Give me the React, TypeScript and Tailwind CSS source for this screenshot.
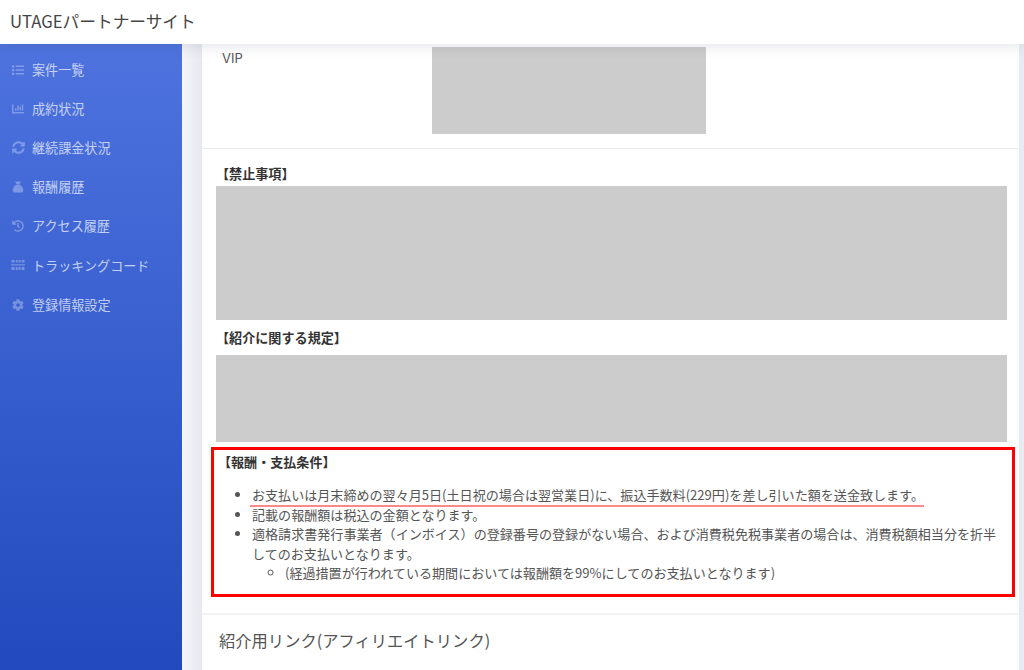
import { FaList, FaChartBar, FaSyncAlt, FaHistory, FaCog } from 'react-icons/fa';

function BagIcon({ className }: { className?: string }) {
  return (
    <svg viewBox="0 0 14 14" className={className} fill="currentColor">
      <path d="M3.600 0.500h6.800L8.800 3.500H5.200zM5.200 4.200h3.600C11 5.600 13.200 8.200 13.200 10.800c0 1.700-1.100 2.700-2.600 2.700H3.400c-1.500 0-2.600-1-2.600-2.700C0.800 8.200 3 5.600 5.200 4.200z" />
    </svg>
  );
}

function TrackingIcon({ className }: { className?: string }) {
  return (
    <svg viewBox="0 0 14 12" className={className} fill="currentColor">
      <path d="M0.500 1h3v2.500h-3zM4.700 1h2v2.500h-2zM7.500 1h2v2.500h-2zM10.500 1h3v2.500h-3zM0 5.300h14v1.200H0zM0.500 8h3v3h-3zM4.700 8h2v3h-2zM7.500 8h2v3h-2zM10.500 8h3v3h-3z" />
    </svg>
  );
}

const navItems = [
  { label: '案件一覧', icon: <FaList className="w-3 h-3" /> },
  { label: '成約状況', icon: <FaChartBar className="w-3 h-3" /> },
  { label: '継続課金状況', icon: <FaSyncAlt className="w-[13px] h-[13px]" /> },
  { label: '報酬履歴', icon: <BagIcon className="w-3 h-3" /> },
  { label: 'アクセス履歴', icon: <FaHistory className="w-3 h-3" /> },
  { label: 'トラッキングコード', icon: <TrackingIcon className="w-[14px] h-3 -ml-px" /> },
  { label: '登録情報設定', icon: <FaCog className="w-3 h-3" /> },
];

export default function App() {
  return (
    <div className="h-[670px] w-[1024px] overflow-hidden flex flex-col bg-[#e9ebf2] text-[#555] font-['Noto_Sans_CJK_JP','Noto_Sans',sans-serif]">
      <header className="relative z-10 h-[44px] shrink-0 bg-white flex items-center pl-[10px] text-[16.700px] text-[#444] shadow-[0_2px_14px_rgba(60,64,90,0.14)]">
        UTAGEパートナーサイト
      </header>

      <div className="flex flex-1 min-h-0">
        <aside className="w-[182px] shrink-0 bg-gradient-to-b from-[#4e73df] to-[#224abe] pt-[6px]">
          {navItems.map((item) => (
            <div key={item.label} className="h-[39.170px] flex items-center pl-[12px] text-[13.100px] text-white/70">
              <span className="w-[20px] flex text-white/30">{item.icon}</span>
              {item.label}
            </div>
          ))}
        </aside>

        <div className="w-[20px] shrink-0 bg-gradient-to-r from-[#f5f6fa] to-[#e7e8ef]" />

        <main className="flex-1 min-w-0 pr-[5px]">
          <div className="bg-white h-full">
            <div className="h-[105px] flex border-b-[1px] border-[#e9e9f0]">
              <div className="w-[230px] pl-[20px] pt-[5px] text-[13px] font-['Inter',sans-serif]">VIP</div>
              <div className="mt-[3px] w-[274px] h-[87px] bg-[#cccccc]" />
            </div>

            <div className="px-[14px] pt-[15px]">
              <p className="h-[22px] text-[13.100px] leading-[20px] font-bold text-[#333]">【禁止事項】</p>
              <div className="h-[134px] w-[791px] bg-[#cccccc]" />
              <p className="h-[35px] pt-[8px] text-[13.100px] leading-[20px] font-bold text-[#333]">【紹介に関する規定】</p>
              <div className="h-[87px] w-[791px] bg-[#cccccc]" />
            </div>

            <div className="ml-[9px] mt-[5px] w-[804px] h-[150px] border-[3px] border-[#ff0000] pl-[4px] pt-[2px] text-[13.070px]">
              <p className="h-[20px] leading-[20px] font-bold text-[#333]">【報酬・支払条件】</p>
              <ul className="mt-[13px] pl-[34px] pr-[6px] list-disc leading-[19.500px]">
                <li>
                  <span className="inline-block -ml-[2px] pl-[2px] w-[674px] -mb-[3px] h-[22px] border-b-[2px] border-[#f88] whitespace-nowrap">
                    お支払いは月末締めの翌々月5日(土日祝の場合は翌営業日)に、振込手数料(229円)を差し引いた額を送金致します。
                  </span>
                </li>
                <li>記載の報酬額は税込の金額となります。</li>
                <li>
                  適格請求書発行事業者（インボイス）の登録番号の登録がない場合、および消費税免税事業者の場合は、消費税額相当分を折半してのお支払いとなります。
                  <ul className="pl-[33px] list-[circle]">
                    <li>(経過措置が行われている期間においては報酬額を99%にしてのお支払いとなります)</li>
                  </ul>
                </li>
              </ul>
            </div>

            <div className="mt-[16px] border-t-[2px] border-[#f1f1f6] pl-[17px] pt-[13px] text-[16.300px] leading-[24px] text-[#555]">
              紹介用リンク(アフィリエイトリンク)
            </div>
          </div>
        </main>
      </div>
    </div>
  );
}
